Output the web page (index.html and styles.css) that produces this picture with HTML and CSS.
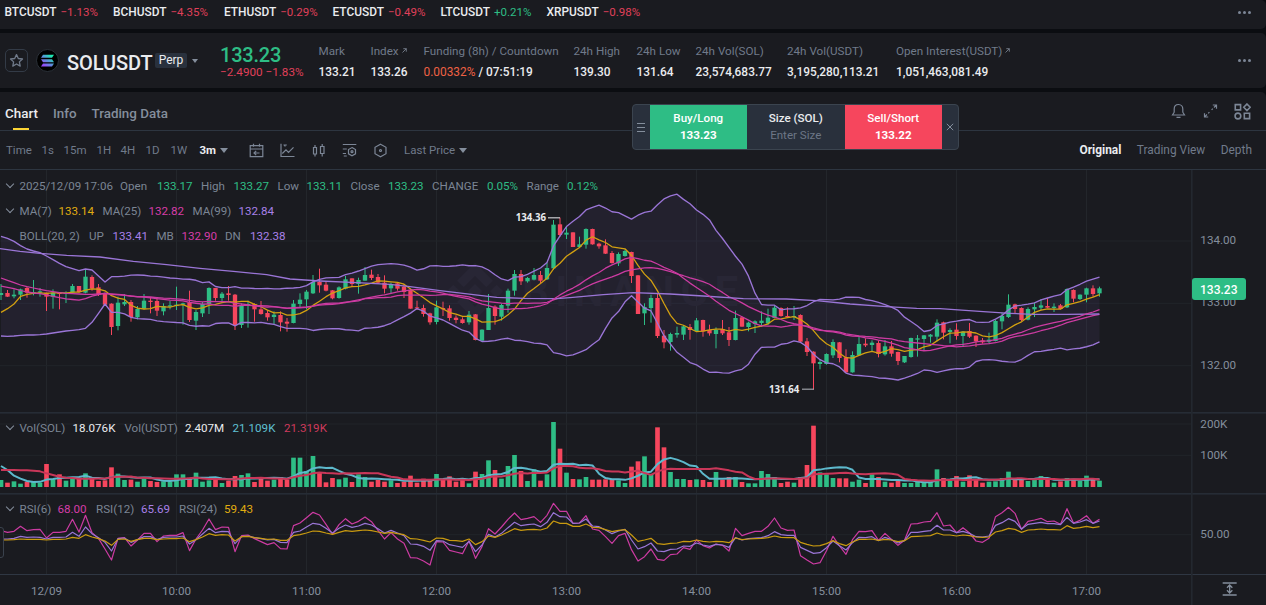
FILE: index.html
```html
<!DOCTYPE html>
<html lang="en">
<head>
    <meta charset="UTF-8">
    <meta name="viewport" content="width=device-width, initial-scale=1.0">
    <title>SOLUSDT Perp</title>
    <link rel="stylesheet" href="styles.css">
</head>
<body>

    <div class="ticker panel">
        <div class="pair"><b>BTCUSDT</b><span class="red">−1.13%</span></div>
        <div class="pair"><b>BCHUSDT</b><span class="red">−4.35%</span></div>
        <div class="pair"><b>ETHUSDT</b><span class="red">−0.29%</span></div>
        <div class="pair"><b>ETCUSDT</b><span class="red">−0.49%</span></div>
        <div class="pair"><b>LTCUSDT</b><span class="green">+0.21%</span></div>
        <div class="pair"><b>XRPUSDT</b><span class="red">−0.98%</span></div>
        <div class="dots"><i></i><i></i><i></i></div>
    </div>

    <div class="header panel">
        <div class="star">
            <svg width="15" height="15" viewBox="0 0 15 15"><path d="M7.5 1.600l1.800 3.900 4.200.5-3.100 2.900.8 4.200-3.700-2.100-3.700 2.100.8-4.200L1.500 6l4.200-.5z" fill="none" stroke="#707a8a" stroke-width="1.3" stroke-linejoin="round"/></svg>
        </div>
        <svg class="coin" width="23" height="23" viewBox="0 0 23 23">
            <defs>
                <linearGradient id="sol" x1="0" y1="1" x2="1" y2="0">
                    <stop offset="0.1" stop-color="#9b45ff"/>
                    <stop offset="0.5" stop-color="#5a91d8"/>
                    <stop offset="0.85" stop-color="#1be9b0"/>
                </linearGradient>
            </defs>
            <circle cx="11.5" cy="11.5" r="11" fill="#000" stroke="#2b3139"/>
            <path d="M7 5.800h11l-2 3H5zM5 10.200h11l2 3H7zM7 14.400h11l-2 3H5z" fill="url(#sol)"/>
        </svg>
        <div class="symbol">SOLUSDT</div>
        <div class="perp">Perp</div>
        <div class="caret"></div>
        <div class="last">
            <div class="last-price green">133.23</div>
            <div class="last-change red">−2.4900 −1.83%</div>
        </div>
        <div class="stats">
            <div class="stat"><span>Mark</span><b>133.21</b></div>
            <div class="stat"><span>Index <svg class="ext" viewBox="0 0 5 5"><path d="M.5 4.500L4.300.7M1.300.7h3v3"/></svg></span><b>133.26</b></div>
            <div class="stat"><span>Funding (8h) / Countdown</span><b><em>0.00332%</em> / 07:51:19</b></div>
            <div class="stat"><span>24h High</span><b>139.30</b></div>
            <div class="stat"><span>24h Low</span><b>131.64</b></div>
            <div class="stat"><span>24h Vol(SOL)</span><b>23,574,683.77</b></div>
            <div class="stat"><span>24h Vol(USDT)</span><b>3,195,280,113.21</b></div>
            <div class="stat"><span>Open Interest(USDT) <svg class="ext" viewBox="0 0 5 5"><path d="M.5 4.500L4.300.7M1.300.7h3v3"/></svg></span><b>1,051,463,081.49</b></div>
        </div>
        <div class="dots"><i></i><i></i><i></i></div>
    </div>

    <div class="main panel">
        <div class="tabs">
            <div class="tab active">Chart</div>
            <div class="tab">Info</div>
            <div class="tab">Trading Data</div>
            <div class="tab-icons">
                <svg width="15" height="16" viewBox="0 0 15 16"><path d="M7.500 1.500C4.800 1.500 3.200 3.500 3.200 6v3.200L1.500 12h12l-1.700-2.800V6c0-2.500-1.600-4.500-4.300-4.500zM5.500 14.300h4"/></svg>
                <svg width="15" height="16" viewBox="0 0 15 16"><path d="M9.800 2h3.700v3.700M13.300 2.200L11 4.500M9.800 5.700L8.600 6.900M1.500 10.300V14h3.700M1.700 13.800L4 11.500M5.200 10.300L6.400 9.100"/></svg>
                <svg class="bold" width="17" height="17" viewBox="0 0 16 16"><path d="M1.200 1.500h5v5h-5zM12.200.9l3 3.100-3 3.100-3-3.100zM9.700 9.700h5v5h-5z"/><circle cx="3.700" cy="12.200" r="2.700"/></svg>
            </div>
        </div>

        <div class="toolbar">
            <div class="intervals">
                <span>Time</span><span>1s</span><span>15m</span><span>1H</span><span>4H</span><span>1D</span><span>1W</span>
                <span class="on">3m</span>
            </div>
            <div class="caret"></div>
            <div class="tools">
                <svg viewBox="0 0 15 15"><path d="M1.200 2.700h12.600v11H1.200zM1.200 6h12.600M4.500.8v3M10.500.8v3M10.500 10H5M7.200 7.900L5 10l2.200 2.100"/></svg>
                <svg viewBox="0 0 15 15"><path d="M1 .8v12.700h13.500M2.300 10.500L6 6.800l2.500 2.500 5-5M3.500 2h3.300M4.300 2l1 1.500"/></svg>
                <svg viewBox="0 0 15 15"><path d="M2.500 4.500h3v6.500h-3zM4 2v2.500M4 11v2.500M9.500 3.500h3.500v7H9.500zM11.200 1v2.500M11.200 10.500v3"/></svg>
                <svg viewBox="0 0 15 15"><path d="M.8 1.500h13.500M.8 6h4M.8 10.500H4M1.800 13h3M10 4.600l3.500 2v4.200l-3.500 2-3.500-2V6.600z"/><circle cx="10" cy="8.700" r="1"/></svg>
                <svg viewBox="0 0 15 15"><path d="M7.500 1.200l5.500 3.100v6.400l-5.500 3.100L2 10.700V4.300z"/><circle cx="7.500" cy="7.500" r="1"/></svg>
            </div>
            <div class="price-type">Last Price</div>
            <div class="caret"></div>
            <div class="views"><span class="on">Original</span><span>Trading View</span><span>Depth</span></div>
        </div>

        <div class="chart">
            <svg id="plot" width="1266" height="435" viewBox="0 0 3798 1305"></svg>

            <div class="legend ohlc">
                <i class="chev"></i><span>2025/12/09 17:06</span>
                <span>Open</span><span class="green">133.17</span>
                <span>High</span><span class="green">133.27</span>
                <span>Low</span><span class="green">133.11</span>
                <span>Close</span><span class="green">133.23</span>
                <span>CHANGE</span><span class="green">0.05%</span>
                <span>Range</span><span class="green">0.12%</span>
            </div>
            <div class="legend ma">
                <i class="chev"></i><span>MA(7)</span><span class="yellow">133.14</span>
                <span>MA(25)</span><span class="pink">132.82</span>
                <span>MA(99)</span><span class="purple">132.84</span>
            </div>
            <div class="legend boll">
                <i></i><span>BOLL(20, 2)</span>
                <span>UP</span><span class="purple">133.41</span>
                <span>MB</span><span class="pink">132.90</span>
                <span>DN</span><span class="purple">132.38</span>
            </div>
            <div class="legend vol">
                <i class="chev"></i><span>Vol(SOL)</span><span class="white">18.076K</span>
                <span>Vol(USDT)</span><span class="white">2.407M</span>
                <span class="cyan">21.109K</span><span class="crimson">21.319K</span>
            </div>
            <div class="legend rsi">
                <i class="chev"></i><span>RSI(6)</span><span class="pink">68.00</span>
                <span>RSI(12)</span><span class="purple">65.69</span>
                <span>RSI(24)</span><span class="yellow">59.43</span>
            </div>
            <div class="price-tag">133.23</div>
            <div class="side-handle"></div>
        </div>
    </div>

    <div class="quick-order">
        <div class="grip"><i></i><i></i><i></i></div>
        <div class="cell buy"><span>Buy/Long</span><b>133.23</b></div>
        <div class="cell size"><span>Size (SOL)</span><small>Enter Size</small></div>
        <div class="cell sell"><span>Sell/Short</span><b>133.22</b></div>
        <div class="close"><svg width="8" height="8" viewBox="0 0 8 8"><path d="M.8.8l6.400 6.400M7.200.8L.8 7.200"/></svg></div>
    </div>

    <script src="chart.js"></script>
</body>
</html>
```

FILE: styles.css
```css
body {
    margin: 0;
    width: 1266px;
    height: 605px;
    overflow: hidden;
    background-color: #0b0d11;
    color: #eaecef;
    font-family: Roboto, "Liberation Sans", sans-serif;
    font-size: 12px;
    display: flex;
    flex-direction: column;
    gap: 4px;
    position: relative;
}

b {
    font-weight: 500;
}

.panel {
    background-color: #1a1b20;
    border-radius: 0 5px 5px 0;
    box-sizing: border-box;
}

.green { color: #2ebd85; }
.red { color: #e0405a; }
.yellow { color: #e0ad10; }
.pink { color: #d63da8; }
.purple { color: #a880e8; }
.cyan { color: #5fc0d3; }
.crimson { color: #cf3a5c; }

/* top strip */
.ticker {
    height: 29px;
    flex: none;
    display: flex;
    padding: 0 15px 5px 4.5px;
    align-items: center;
}

.pair {
    display: flex;
    align-items: baseline;
    width: 108.5px;
    font-size: 11.5px;
    gap: 4px;
}

.pair b {
    font-size: 11.9px;
}

.pair:nth-child(2) { width: 111px; }
.pair:nth-child(4) { width: 108px; }
.pair:nth-child(5) { width: 106px; }

.dots {
    margin-left: auto;
    display: flex;
    gap: 2px;
}

.dots i {
    width: 3px;
    height: 3px;
    border-radius: 50%;
    background-color: #7c8696;
}

/* symbol header */
.header {
    height: 55px;
    flex: none;
    display: flex;
    align-items: center;
    padding: 0 15px 0 5px;
}

.star {
    width: 21px;
    height: 21px;
    border: 1px solid #333b47;
    border-radius: 5px;
    display: flex;
    align-items: center;
    justify-content: center;
    margin-right: 8px;
}

.coin {
    margin-right: 8px;
    margin-top: -1px;
}

.symbol {
    width: 88px;
    font-size: 20px;
    font-weight: 500;
    letter-spacing: -0.1px;
    margin-top: 4px;
}

.perp {
    width: 32px;
    height: 15px;
    line-height: 15px;
    border-radius: 2px;
    background-color: #29313d;
    text-align: center;
    font-size: 12px;
}

.caret {
    border: 4px solid transparent;
    border-top: 5px solid #848e9c;
    border-bottom: 0;
}

.header .caret {
    border-width: 4.5px 3.5px 0;
    margin-left: 5px;
}

.last {
    width: 98px;
    margin-left: 22px;
    margin-top: 2px;
}

.last-price {
    font-size: 20px;
    line-height: 22px;
    font-weight: 500;
    letter-spacing: -0.2px;
}

.last-change {
    font-size: 11.7px;
    line-height: 14px;
    margin-top: -1px;
    white-space: nowrap;
}

.stats {
    display: grid;
    grid-template-columns: 52px 53px 150px 63px 59px 91.5px 109px 130px;
    margin: 2px 0 0 0.5px;
}

.stat {
    display: flex;
    flex-direction: column;
    line-height: 21px;
    white-space: nowrap;
    font-size: 11.65px;
}

.stat b {
    font-size: 11.9px;
}

.stat span {
    color: #707a8a;
}

.stat em {
    font-style: normal;
    font-weight: 400;
    color: #ee6144;
}

.ext {
    width: 5px;
    height: 5px;
    fill: none;
    stroke: #848e9c;
    stroke-width: 0.8;
    vertical-align: 2px;
}

/* chart panel */
.main {
    flex: 1;
    display: flex;
    flex-direction: column;
    border-radius: 0 5px 0 0;
}

.tabs {
    height: 38px;
    display: flex;
    border-bottom: 1px solid #2d3540;
    padding: 0 15px 0 5px;
    gap: 15px;
}

.tab {
    font-size: 13.4px;
    font-weight: 500;
    line-height: 43px;
    color: #848e9c;
}

.tab.active {
    color: #eaecef;
    display: flex;
    justify-content: center;
    background: linear-gradient(#fcd535, #fcd535) center bottom / 16px 2px no-repeat;
}

.tab-icons {
    margin-left: auto;
    display: flex;
    align-items: center;
    gap: 16.5px;
}

.tab-icons svg,
.tools svg {
    fill: none;
    stroke: #7c8696;
    stroke-width: 1.2;
}

.tab-icons .bold {
    stroke-width: 1.5;
}

.toolbar {
    height: 38px;
    display: flex;
    align-items: center;
    border-bottom: 1px solid #2d3540;
    padding: 0 14px 0 6px;
    color: #707a8a;
    font-size: 11.5px;
}

.toolbar .on {
    color: #eaecef;
    font-weight: 700;
}

.intervals {
    display: grid;
    grid-template-columns: 35.5px 22px 33px 24px 25px 25px 29px 20px;
}

.tools {
    display: flex;
    gap: 16px;
    margin: 0 16.5px 0 21px;
}

.tools svg {
    width: 15px;
    height: 15px;
}

.price-type {
    width: 55px;
}

.views {
    margin-left: auto;
    display: flex;
    gap: 15.5px;
    font-size: 11.9px;
}

.chart {
    flex: 1;
    position: relative;
}

#plot {
    display: block;
}

.axis {
    fill: #848e9c;
    font-size: 35px;
}

.mark {
    fill: #eaecef;
    font-family: "Noto Sans", sans-serif;
    font-weight: 700;
    font-size: 29px;
}

/* legends lie over the plot */
.legend {
    position: absolute;
    left: 5px;
    display: grid;
    align-items: center;
    line-height: 16px;
    font-size: 11.6px;
    color: #7b8594;
    white-space: nowrap;
}

.ohlc {
    top: 8px;
    grid-template-columns: 14.5px 100.5px 37px 44px 32.5px 44px 29px 44px 37.5px 44px 55px 39.5px 40.5px 40px;
}

.ma {
    top: 33px;
    grid-template-columns: 14.5px 39px 44px 46px 44px 46px 44px;
}

.boll {
    top: 58px;
    grid-template-columns: 14.5px 69.5px 23.5px 44px 25px 43.5px 25px 44px;
}

.vol {
    top: 250px;
    grid-template-columns: 14.5px 53px 52px 60.5px 47.5px 51.5px 50px;
}

.rsi {
    top: 331px;
    grid-template-columns: 14.5px 38px 38.5px 45px 38px 45px 40px;
}

.vol .white {
    color: #eaecef;
}

.chev {
    width: 5px;
    height: 5px;
    border: solid #848e9c;
    border-width: 0 1px 1px 0;
    transform: translate(2px, -2px) rotate(45deg);
}

.price-tag {
    position: absolute;
    left: 1192px;
    top: 108px;
    width: 53.5px;
    height: 22px;
    line-height: 24px;
    border-radius: 3px;
    background-color: #2ebd85;
    color: #fff;
    text-align: center;
    font-weight: 500;
}

.side-handle {
    position: absolute;
    left: -4px;
    top: 357px;
    width: 6px;
    height: 29px;
    border: 1px solid #3a424d;
    border-radius: 3px;
    background-color: #1a1b20;
}

/* floating order box */
.quick-order {
    position: absolute;
    left: 632px;
    top: 104px;
    width: 327px;
    height: 46px;
    box-sizing: border-box;
    border: 1px solid #3b444f;
    border-radius: 4px;
    background-color: #29303c;
    display: flex;
}

.grip {
    width: 16.5px;
    display: flex;
    flex-direction: column;
    align-items: center;
    justify-content: center;
    gap: 3px;
}

.grip i {
    width: 8px;
    height: 1px;
    background-color: #848e9c;
}

.cell {
    width: 97.5px;
    display: flex;
    flex-direction: column;
    align-items: center;
    justify-content: center;
    line-height: 17px;
    font-size: 11.6px;
    font-weight: 500;
    padding-bottom: 1px;
}

.cell small {
    font-size: 11.6px;
    font-weight: 400;
    color: #6c7686;
}

.buy { background-color: #2ebd85; color: #fff; }
.sell { background-color: #f6465d; color: #fff; }

.cell b {
    font-weight: 700;
}

.close {
    flex: 1;
    display: flex;
    align-items: center;
    justify-content: center;
    fill: none;
    stroke: #848e9c;
}
```

FILE: chart.js
```js
// all coordinates are in thirds of a pixel
const STEP = 19.5;
const X0 = 3;
const AXIS_X = 3576;
const UP = '#2ebd85', DOWN = '#f6465d';
const YELLOW = '#d3a010', PINK = '#cc3ba2', PURPLE = '#9a75d6';

// direction, wick top, body top, body bottom, wick bottom
const candles = `
g342,369,375,390 r360,369,380,381 g358,374,379,385 g356,358,374,390 r350,354,368,383
g330,366,371,376 g354,364,368,380 r368,368,380,423 g358,368,380,416 r368,369,372,418
g364,368,372,399 g342,348,368,372 r348,348,366,368 g299,320,368,370 r316,321,356,362
r342,352,374,378 r368,372,404,406 r400,401,471,495 g380,398,468,481 g372,396,403,408
r390,396,441,455 g408,417,442,448 g372,392,416,418 r382,392,396,430 r384,393,422,438
g400,408,424,436 g393,406,410,418 g350,404,408,420 g398,400,404,464 r362,397,450,456
g420,426,452,480 g396,402,430,441 g352,354,402,432 r354,354,384,392 g366,371,384,397
r348,370,375,392 r372,374,465,480 g400,408,465,474 g392,402,408,473 r400,402,418,455
r393,418,432,434 r420,429,442,452 g424,434,441,462 r424,435,457,484 r444,455,461,485
g390,401,459,460 g370,389,402,412 g360,365,388,418 g315,336,370,372 r296,336,346,368
r335,344,362,364 r360,361,385,388 g349,352,384,386 g318,328,356,358 r325,325,342,350
g323,330,342,371 g291,315,332,332 r299,314,324,330 r312,321,338,342 r316,338,356,370
g338,342,355,370 r338,340,356,362 r342,350,366,384 r356,359,416,416 r392,412,415,420
r404,414,432,440 r428,430,457,464 g392,412,456,463 r395,414,418,438 r406,415,444,452
r436,443,450,460 r442,448,459,461 g423,434,457,464 r432,433,510,511 g478,479,512,514
g372,414,480,480 r406,410,438,464 g401,405,440,452 g356,362,407,428 g300,312,362,377
r300,312,334,345 g321,324,334,338 g294,315,329,331 r303,315,332,340 g278,294,328,330
g150,164,295,299 r143,163,195,200 g170,188,194,207 r187,187,231,231 g200,223,231,234
g175,177,224,236 r176,177,223,224 r218,221,229,236 r208,226,251,252 r243,249,279,281
g247,252,280,288 g238,243,258,260 r245,246,318,339 r315,316,432,432 g400,411,430,465
g374,384,414,458 r372,384,498,504 r480,497,517,535 g488,492,516,542 g470,489,494,503
g465,469,494,510 r462,471,480,509 g444,451,483,485 r449,450,484,500 r464,480,490,497
g472,480,492,535 r450,477,490,495 r471,487,510,528 g422,444,510,511 r440,442,470,470
g455,458,471,484 g451,454,462,489 g424,452,459,470 g416,443,460,465 g408,413,444,444
r412,414,438,440 r412,438,442,444 g408,438,440,450 r433,435,515,516 r504,514,546,558
r544,545,580,658 g567,576,582,598 g550,552,582,584 g508,516,556,564 r516,517,564,577
r538,562,607,608 g544,555,607,608 g500,522,556,557 r505,521,526,531 g511,518,525,544
r512,519,552,562 g510,529,553,557 r513,529,551,560 r545,546,573,585 g558,558,577,579
g503,504,561,563 g495,505,509,560 g495,496,507,542 g492,494,500,518 g448,458,500,514
r455,457,488,508 g475,480,486,520 r460,479,498,509 g483,485,498,530 r459,483,500,504
r496,497,514,531 r504,511,517,521 g488,509,515,520 g450,453,513,514 g428,438,454,478
g373,404,441,444 r401,403,417,430 r412,414,450,454 g412,417,449,451 g398,411,418,441
g388,406,413,420 r385,408,413,414 g400,410,414,426 r402,406,417,418 g355,357,412,414
r358,360,386,397 g373,374,387,390 g353,355,374,397 r346,355,372,380 g350,355,370,380
`.trim().split(/\s+/).map(s => ({ up: s[0] === 'g', v: s.slice(1).split(',').map(Number) }));

const volume = [
    225,233,229,236,230,228,233,177,223,208,227,222,222,205,222,228,226,187,206,225,
    224,230,222,228,231,229,230,208,208,218,203,230,226,223,234,227,213,210,205,231,
    220,227,224,216,224,158,158,198,153,201,232,219,223,218,231,208,216,230,225,230,
    226,234,230,212,233,221,228,207,224,214,230,224,235,200,207,166,195,221,183,150,
    198,228,193,227,208,51,131,203,222,223,216,224,224,223,225,226,234,185,169,154,
    207,67,127,201,222,222,225,223,225,231,201,224,216,216,231,235,235,198,207,216,
    234,230,233,216,180,62,202,208,219,220,220,230,224,234,208,216,230,233,228,234,
    234,230,231,231,193,219,228,213,230,211,223,233,230,229,219,200,223,224,228,224,
    213,223,233,229,219,225,228,212,220,227
];

const rsi6 = [
    377,382,379,364,377,374,373,399,382,382,379,343,381,331,383,400,432,465,400,398,
    423,405,385,385,410,393,391,391,383,437,402,375,342,374,366,367,440,392,390,401,
    410,419,413,431,432,362,354,338,322,330,358,388,359,341,357,349,336,350,376,402,
    383,402,415,458,459,468,480,410,411,436,441,446,407,460,425,371,387,366,343,324,
    344,340,335,352,331,295,319,319,355,354,332,372,376,395,415,392,385,434,468,455,
    432,463,466,449,447,428,433,405,422,429,417,421,438,370,392,385,379,379,364,339,
    369,376,375,452,465,477,473,437,394,423,448,404,379,380,377,406,385,403,421,406,
    357,356,351,349,323,363,360,383,368,384,408,412,400,335,323,307,325,373,349,345,
    340,350,348,358,311,354,346,332,355,343
];
const rsi12 = [
    402,402,400,394,397,396,397,402,397,397,396,382,394,366,386,398,412,438,401,399,
    412,404,395,395,404,397,396,396,393,417,404,387,370,383,379,380,416,395,393,398,
    401,405,403,412,413,382,378,366,355,358,370,384,370,360,367,363,355,360,371,384,
    376,384,392,417,418,424,436,407,408,419,423,427,409,440,420,388,396,385,368,352,
    362,359,357,365,352,323,335,336,355,354,342,363,365,375,386,378,373,405,432,425,
    414,438,440,433,432,423,424,414,420,424,418,420,427,398,405,401,399,398,392,380,
    389,391,391,427,436,445,443,428,408,422,435,413,397,398,395,407,397,404,414,407,
    382,382,379,377,361,375,375,383,379,385,395,396,393,361,353,341,349,372,358,355,
    352,356,356,359,337,355,351,344,355,348
];
const rsi24 = [
    405,405,404,402,403,403,403,405,403,403,402,397,400,389,396,401,408,421,403,402,
    409,404,400,400,404,402,401,401,399,410,404,396,386,391,389,390,408,395,394,398,
    400,403,402,406,406,392,389,384,378,379,384,388,382,377,379,377,375,377,381,385,
    382,386,389,401,402,406,411,399,400,406,407,409,402,419,410,393,397,390,381,371,
    376,374,373,375,369,348,355,355,364,364,357,367,368,374,380,376,374,390,409,405,
    400,416,418,415,414,409,410,405,409,411,409,410,413,399,404,402,401,400,398,393,
    397,398,398,412,418,423,422,416,407,416,422,411,403,403,402,406,403,405,410,407,
    395,394,393,392,384,390,390,393,390,392,396,397,396,381,377,370,373,382,375,374,
    372,374,374,375,362,370,368,364,368,365
];

const ma99 = [
    [0,236],[60,244],[120,250],[200,256],[300,261],[400,274],[500,284],[600,295],[700,304],
    [800,314],[870,327],[960,333],[1070,338],[1170,343],[1230,350],[1320,362],[1420,374],
    [1490,382],[1570,385],[1670,386],[1710,383],[1810,374],[1900,368],[2010,372],[2110,378],
    [2230,386],[2360,387],[2450,392],[2550,402],[2660,410],[2750,415],[2820,416],[2950,425],
    [3030,430],[3100,433],[3200,433],[3298,432]
];

// averages need history from before the first candle, so each has its own start
const seed7 = [427,416,402,379,373,370];
const seed25 = [324,331,338,345,350,354,358,362,365,368,370,371,372,373,373,372,371,372,374,376,378,380,380,381];
const seedUp = [199,205,214,227,237,243,248,258,269,280,290,296,302,297,300,318,336,320,320];
const seedDn = [498,499,498,496,495,495,494,492,489,486,483,481,479,475,457,430,402,427,427];
const seedVol7 = [183,195,212,221,228,231];
const seedVol14 = [195,195,195,196,196,197,199,205,210,215,218,219,221];

const x = i => X0 + STEP * i;
const close = candles.map(c => c.up ? c.v[1] : c.v[2]);

function average(data, n, seed) {
    return data.map((_, i) => {
        if (i < n - 1) return seed[i];
        return data.slice(i - n + 1, i + 1).reduce((a, b) => a + b, 0) / n;
    });
}

const ma20 = average(close, 20, seedUp.map((u, i) => (u + seedDn[i]) / 2));
const spread = close.map((_, i) => {
    if (i < 19) return (seedDn[i] - seedUp[i]) / 2;
    const part = close.slice(i - 19, i + 1);
    return 2 * Math.sqrt(part.reduce((a, b) => a + (b - ma20[i]) ** 2, 0) / 20);
});
const bollUp = ma20.map((m, i) => m - spread[i]);
const bollDn = ma20.map((m, i) => m + spread[i]);

const pts = data => data.map((y, i) => [x(i), y]);
const line = (p, color, w) => `<polyline points="${p.join(' ')}" fill="none" stroke="${color}" stroke-width="${w}" stroke-linejoin="round"/>`;
const rect = (l, t, w, h, color) => `<rect x="${l}" y="${t}" width="${w}" height="${h}" fill="${color}"/>`;

let out = '';

// grid
for (let h = 0; h < 9; h++) out += rect(138 + h * 390, 0, 3, 1212, '#23262b');
[213, 400, 587, 762, 856, 1094].forEach(y => out += rect(0, y - 1.5, AXIS_X, 3, '#212529'));

// watermark
out += `<g fill="#202127">
<path d="M1425 278l54 54-20 20-34-34-34 34-20-20zM1360 344l20 20-20 20-20-20zM1490 344l20 20-20 20-20-20zM1425 342l22 22-22 22-22-22zM1371 396l20-20 34 34 34-34 20 20-54 54z"/>
<text x="1566" y="407" font-size="126" font-weight="700" textLength="648">BINANCE</text></g>`;

// price pane
const up = pts(bollUp), dn = pts(bollDn);
out += `<polygon points="${up.concat([...dn].reverse()).join(' ')}" fill="#9b70f0" fill-opacity="0.07"/>`;
candles.forEach((c, i) => {
    const color = c.up ? UP : DOWN;
    const [hi, top, bottom, lo] = c.v;
    out += rect(x(i) - 1.5, hi, 3, lo - hi, color);
    out += rect(x(i) - 6.5, top, 13, Math.max(bottom - top, 3), color);
});
out += line(pts(average(close, 7, seed7)), YELLOW, 3.8);
out += line(pts(average(close, 25, seed25)), PINK, 3.8);
out += line(ma99, PURPLE, 4);
out += line(pts(ma20), PINK, 3.8);
out += line(up, PURPLE, 4);
out += line(dn, PURPLE, 4);
out += rect(1644, 142, 36, 3, '#eaecef') + '<text class="mark" x="1547" y="154">134.36</text>';
out += rect(2406, 656, 36, 3, '#b7bac0') + '<text class="mark" x="2307" y="669">131.64</text>';

// volume and rsi panes
out += '<g transform="translate(0 705)">';
volume.forEach((y, i) => out += rect(x(i) - 7, y, 14, 246 - y, candles[i].up ? UP : DOWN));
out += line(pts(average(volume, 7, seedVol7)), '#5db9cc', 6);
out += line(pts(average(volume, 14, seedVol14)), '#c93759', 6);
out += line(pts(rsi6), PINK, 3.6) + line(pts(rsi12), PURPLE, 3.6) + line(pts(rsi24), '#c99a10', 3.6);
out += '</g>';

// pane borders
[729, 972].forEach(y => out += rect(0, y - 3, 3798, 5, '#262c35'));
out += rect(0, 1212, 3798, 3, '#2f3743');
out += rect(AXIS_X - 3, 0, 5, 1305, '#23282f');

// axis labels
[['134.00', 222], ['133.00', 409], ['132.00', 596], ['200K', 773], ['100K', 866], ['50.00', 1104]]
    .forEach(([t, y]) => out += `<text class="axis" x="3601" y="${y}">${t}</text>`);
['12/09', '10:00', '11:00', '12:00', '13:00', '14:00', '15:00', '16:00', '17:00']
    .forEach((t, i) => out += `<text class="axis" text-anchor="middle" x="${139.5 + i * 390}" y="1276">${t}</text>`);

// auto scale button
out += '<path d="M3668 1239h42M3668 1275h42M3689 1246v22M3681 1253l8-8 8 8M3681 1261l8 8 8-8" fill="none" stroke="#848e9c" stroke-width="4"/>';

document.getElementById('plot').innerHTML = out;
```
